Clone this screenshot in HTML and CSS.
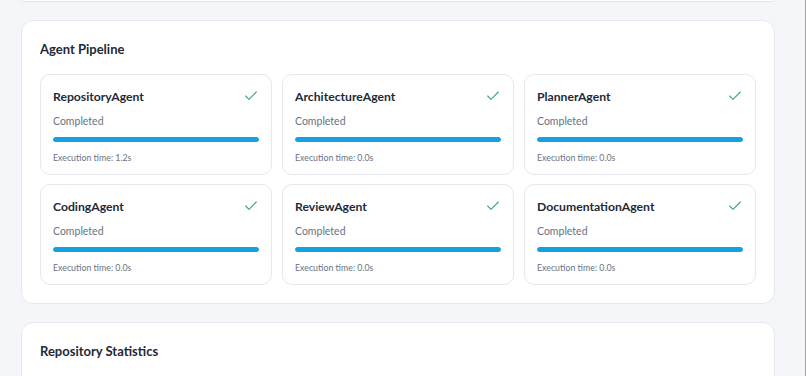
FILE: index.html
```html
<!DOCTYPE html>
<html lang="en">
<head>
  <meta charset="UTF-8" />
  <meta name="viewport" content="width=device-width, initial-scale=1.0" />
  <title>Agent Dashboard</title>
  <link rel="stylesheet" href="styles.css">
</head>
<body>
  <div class="page">
    <!-- end of the previous panel, scrolled out of view -->
    <section class="panel panel-tail"></section>

    <!-- Agent Pipeline -->
    <section class="panel">
      <h2>Agent Pipeline</h2>
      <div class="agent-grid">
        <div class="agent">
          <div class="agent-head">
            <span class="agent-name">RepositoryAgent</span>
            <svg class="check" viewBox="0 0 24 24"><polyline points="20 6 9 17 4 12"/></svg>
          </div>
          <div class="agent-status">Completed</div>
          <div class="bar"><div class="bar-fill" style="width: 100%"></div></div>
          <div class="agent-time">Execution time: 1.2s</div>
        </div>
        <div class="agent">
          <div class="agent-head">
            <span class="agent-name">ArchitectureAgent</span>
            <svg class="check" viewBox="0 0 24 24"><polyline points="20 6 9 17 4 12"/></svg>
          </div>
          <div class="agent-status">Completed</div>
          <div class="bar"><div class="bar-fill" style="width: 100%"></div></div>
          <div class="agent-time">Execution time: 0.0s</div>
        </div>
        <div class="agent">
          <div class="agent-head">
            <span class="agent-name">PlannerAgent</span>
            <svg class="check" viewBox="0 0 24 24"><polyline points="20 6 9 17 4 12"/></svg>
          </div>
          <div class="agent-status">Completed</div>
          <div class="bar"><div class="bar-fill" style="width: 100%"></div></div>
          <div class="agent-time">Execution time: 0.0s</div>
        </div>
        <div class="agent">
          <div class="agent-head">
            <span class="agent-name">CodingAgent</span>
            <svg class="check" viewBox="0 0 24 24"><polyline points="20 6 9 17 4 12"/></svg>
          </div>
          <div class="agent-status">Completed</div>
          <div class="bar"><div class="bar-fill" style="width: 100%"></div></div>
          <div class="agent-time">Execution time: 0.0s</div>
        </div>
        <div class="agent">
          <div class="agent-head">
            <span class="agent-name">ReviewAgent</span>
            <svg class="check" viewBox="0 0 24 24"><polyline points="20 6 9 17 4 12"/></svg>
          </div>
          <div class="agent-status">Completed</div>
          <div class="bar"><div class="bar-fill" style="width: 100%"></div></div>
          <div class="agent-time">Execution time: 0.0s</div>
        </div>
        <div class="agent">
          <div class="agent-head">
            <span class="agent-name">DocumentationAgent</span>
            <svg class="check" viewBox="0 0 24 24"><polyline points="20 6 9 17 4 12"/></svg>
          </div>
          <div class="agent-status">Completed</div>
          <div class="bar"><div class="bar-fill" style="width: 100%"></div></div>
          <div class="agent-time">Execution time: 0.0s</div>
        </div>
      </div>
    </section>

    <!-- Repository Statistics -->
    <section class="panel">
      <h2>Repository Statistics</h2>
    </section>
  </div>
</body>
</html>
```

FILE: styles.css
```css
body {
  margin: 0;
  font-family: "Lato", "Noto Sans", sans-serif;
  background-color: #f5f6fa;
  color: #1f2937;
}

.page {
  display: flex;
  flex-direction: column;
  gap: 18px;
  padding: 0 30px 0 21px;
  border-right: 1px solid #a3a3a8;
  height: 376px;
  overflow: hidden;
  box-sizing: border-box;
}

.panel {
  flex-shrink: 0;
  padding: 18px;
  background-color: #fff;
  border: 1px solid #e6e8ee;
  border-radius: 12px;
}

.panel-tail {
  height: 1px;
  padding: 0;
  border-top: none;
  border-radius: 0 0 12px 12px;
}

.panel h2 {
  margin: 0 0 14px;
  font-size: 13px;
  line-height: 21px;
  font-weight: 700;
  color: #1f2937;
}

.agent-grid {
  display: grid;
  grid-template-columns: repeat(3, 1fr);
  gap: 9px 10px;
}

.agent {
  padding: 12px 12px 10px;
  border: 1px solid #e6e8ee;
  border-radius: 10px;
}

.agent-head {
  display: flex;
  justify-content: space-between;
  align-items: center;
  height: 18px;
}

.agent-name {
  font-size: 12.2px;
  font-weight: 700;
  color: #1f2937;
}

.check {
  width: 16px;
  height: 16px;
  fill: none;
  stroke: #3aa772;
  stroke-width: 1.6;
  stroke-linecap: round;
  stroke-linejoin: round;
}

.agent-status {
  margin-top: 8px;
  font-size: 10.5px;
  line-height: 16px;
  color: #6b7280;
}

.bar {
  margin-top: 8px;
  height: 5px;
  border-radius: 3px;
  background-color: #e5e7eb;
  overflow: hidden;
}

.bar-fill {
  height: 100%;
  border-radius: 3px;
  background-color: #14a1e1;
}

.agent-time {
  margin-top: 9px;
  font-size: 8.8px;
  line-height: 13px;
  color: #6b7280;
}
```
